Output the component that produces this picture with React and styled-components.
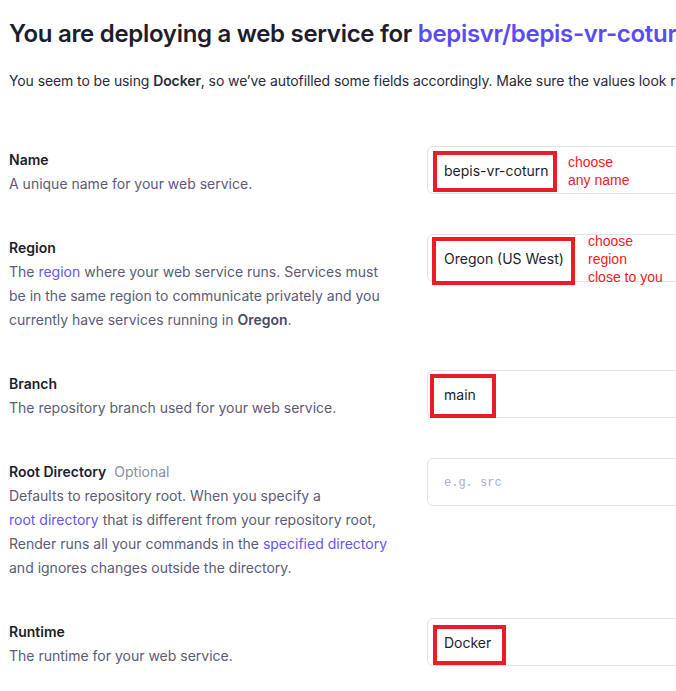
import React from "react";
import styled, { createGlobalStyle } from "styled-components";

const GlobalStyle = createGlobalStyle`
  html, body {
    margin: 0;
    padding: 0;
    background: #ffffff;
    overflow: hidden;
  }
  body {
    font-family: Inter, "Noto Sans", sans-serif;
    color: #1d1d2b;
  }
`;

const Page = styled.main`
  width: 1000px;
  padding: 18px 0 0 9px;
`;

const Title = styled.h1`
  margin: 0;
  font-size: 24px;
  line-height: 32px;
  font-weight: 600;
  letter-spacing: -0.3px;
  color: #1d1d2b;
  white-space: nowrap;
`;

const RepoLink = styled.a`
  color: #5a4cf5;
  text-decoration: none;
`;

const Intro = styled.p`
  margin: 21px 0 0;
  font-size: 14px;
  line-height: 20px;
  letter-spacing: -0.1px;
  color: #2a2a3a;
  white-space: nowrap;

  b {
    font-weight: 600;
  }
`;

const Form = styled.div`
  margin-top: 55px;
  display: flex;
  flex-direction: column;
  gap: 40px;
`;

const Row = styled.section`
  display: grid;
  grid-template-columns: 380px 560px;
  column-gap: 38px;
  align-items: start;
`;

const Info = styled.div`
  margin: 2px 0 -2px;
  font-size: 14px;
  line-height: 24px;
`;

const Label = styled.div`
  font-weight: 600;
  color: #1d1d2b;
`;

const Optional = styled.span`
  margin-left: 8px;
  font-weight: 400;
  color: #8c8ca3;
`;

const Description = styled.div`
  color: #5b5b78;

  b {
    font-weight: 600;
    color: #4a4a66;
  }
`;

const DocLink = styled.a`
  color: #6655f2;
  text-decoration: none;
  white-space: nowrap;
`;

const Field = styled.div`
  position: relative;
  box-sizing: border-box;
  height: 48px;
  border: 1px solid #e3e3e8;
  border-radius: 6px;
  padding: 1px 16px 0;
  display: flex;
  align-items: center;
  font-size: 14px;
  color: #1d1d2b;
`;

const Placeholder = styled.span`
  font-family: "Liberation Mono", "DejaVu Sans Mono", monospace;
  font-size: 12px;
  color: #a9b0cc;
`;

const Highlight = styled.div`
  position: absolute;
  box-sizing: border-box;
  left: ${(p) => p.$left}px;
  top: ${(p) => p.$top}px;
  width: ${(p) => p.$width}px;
  height: ${(p) => p.$height}px;
  border: 4px solid #ec1c24;
  pointer-events: none;
`;

const Note = styled.div`
  position: absolute;
  left: ${(p) => p.$left}px;
  top: ${(p) => p.$top}px;
  font-family: "Liberation Sans", Arial, sans-serif;
  font-size: 14px;
  line-height: 18px;
  color: #ec1c24;
  white-space: pre;
`;

const rows = [
  {
    label: "Name",
    desc: <>A unique name for your web service.</>,
    value: "bepis-vr-coturn",
    box: { left: 5, top: 4, width: 124, height: 41 },
    note: { left: 140, top: 6, text: "choose\nany name" },
  },
  {
    label: "Region",
    desc: (
      <>
        The <DocLink href="#">region</DocLink> where your web service runs.
        Services must be in the same region to communicate privately and you
        currently have services running in <b>Oregon</b>.
      </>
    ),
    value: "Oregon (US West)",
    box: { left: 4, top: 2, width: 143, height: 48 },
    note: { left: 160, top: -3, text: "choose\nregion\nclose to you" },
  },
  {
    label: "Branch",
    desc: <>The repository branch used for your web service.</>,
    value: "main",
    box: { left: 2, top: 3, width: 66, height: 44 },
  },
  {
    label: "Root Directory",
    optional: true,
    desc: (
      <>
        Defaults to repository root. When you specify a{" "}
        <DocLink href="#">root directory</DocLink> that is different from your
        repository root, Render runs all your commands in the{" "}
        <DocLink href="#">specified directory</DocLink> and ignores changes
        outside the directory.
      </>
    ),
    placeholder: "e.g. src",
  },
  {
    label: "Runtime",
    desc: <>The runtime for your web service.</>,
    value: "Docker",
    box: { left: 5, top: 6, width: 73, height: 40 },
  },
];

export default function App() {
  return (
    <>
      <GlobalStyle />
      <Page>
        <Title>
          You are deploying a web service for{" "}
          <RepoLink href="#">bepisvr/bepis-vr-coturn</RepoLink>
        </Title>
        <Intro>
          You seem to be using <b>Docker</b>, so we’ve autofilled some fields
          accordingly. Make sure the values look right before you deploy.
        </Intro>
        <Form>
          {rows.map((row) => (
            <Row key={row.label}>
              <Info>
                <Label>
                  {row.label}
                  {row.optional && <Optional>Optional</Optional>}
                </Label>
                <Description>{row.desc}</Description>
              </Info>
              <Field>
                {row.placeholder ? (
                  <Placeholder>{row.placeholder}</Placeholder>
                ) : (
                  row.value
                )}
                {row.box && (
                  <Highlight
                    $left={row.box.left}
                    $top={row.box.top}
                    $width={row.box.width}
                    $height={row.box.height}
                  />
                )}
                {row.note && (
                  <Note $left={row.note.left} $top={row.note.top}>
                    {row.note.text}
                  </Note>
                )}
              </Field>
            </Row>
          ))}
        </Form>
      </Page>
    </>
  );
}
